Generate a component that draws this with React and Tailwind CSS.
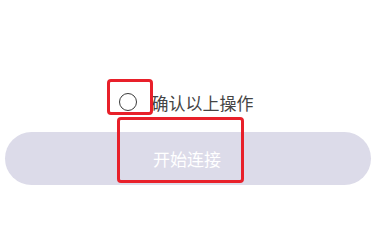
import React from "react";

const App = () => {
  return (
    <div
      className="relative w-full h-[207px] bg-white overflow-hidden pt-[93px]"
      style={{ fontFamily: '"Noto Sans CJK SC", "Noto Sans", sans-serif' }}
    >
      {/* Agreement row */}
      <div className="flex items-center justify-center gap-[15px] h-[18px] pr-[4px]">
        <span className="w-[18px] h-[18px] rounded-full border border-[#3a3a3a] shrink-0" />
        <span className="text-[17px] leading-none text-[#444]">确认以上操作</span>
      </div>

      {/* Connect button */}
      <button className="mt-[21px] mx-[5px] w-[calc(100%-10px)] h-[53px] rounded-full bg-[#dcdbe9] flex items-center justify-center pr-[2px]">
        <span className="text-[17px] leading-none text-white">开始连接</span>
      </button>

      {/* Annotation boxes */}
      <div className="absolute left-[107px] top-[79px] w-[46px] h-[36px] border-[3px] border-[#e8202a] rounded-[4px]" />
      <div className="absolute left-[117px] top-[117px] w-[127px] h-[66px] border-[3px] border-[#e8202a] rounded-[4px]" />
    </div>
  );
};

export default App;
